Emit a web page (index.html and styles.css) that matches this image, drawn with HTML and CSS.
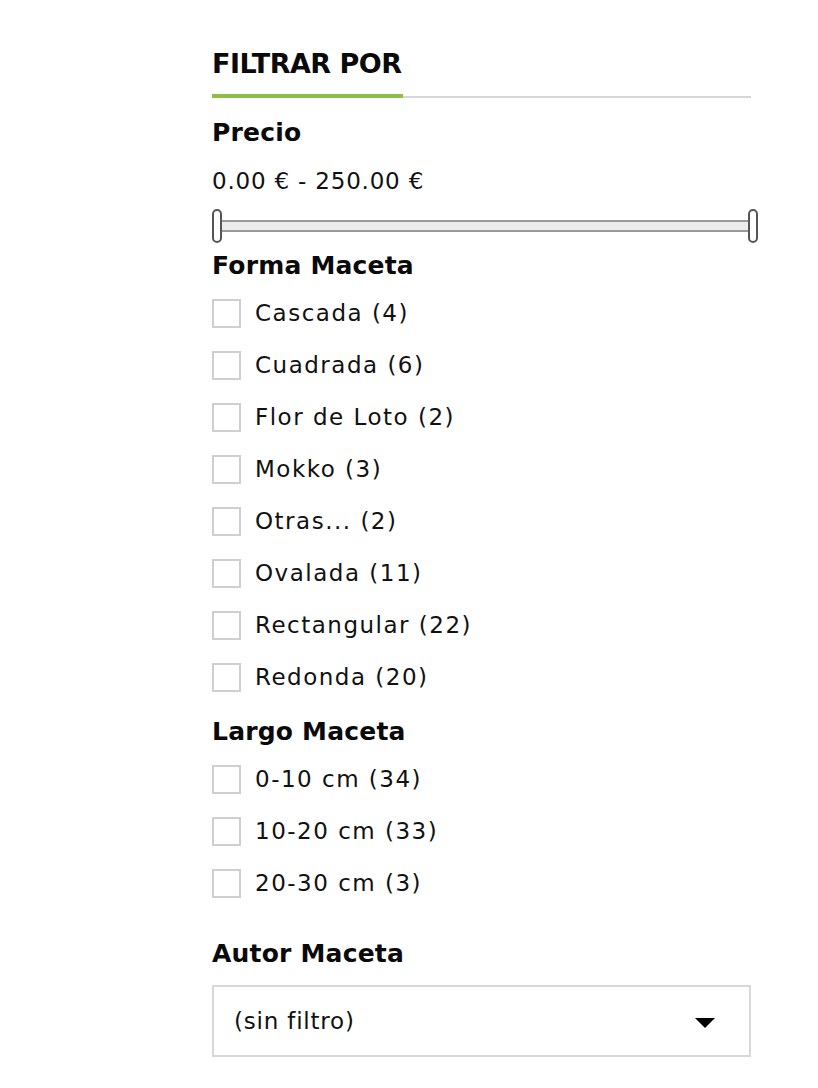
FILE: index.html
```html
<!DOCTYPE html>
<html lang="es">
<head>
<meta charset="utf-8">
<title>Filtrar por</title>
<link rel="stylesheet" href="styles.css">
</head>
<body>
<aside class="filters">
  <h2 class="title">FILTRAR POR</h2>

  <section class="group group-precio">
    <h3 class="group-title">Precio</h3>
    <p class="range-text">0.00 € - 250.00 €</p>
    <div class="slider">
      <span class="thumb"></span>
      <span class="track"></span>
      <span class="thumb"></span>
    </div>
  </section>

  <section class="group group-forma">
    <h3 class="group-title">Forma Maceta</h3>
    <ul class="options">
      <li class="option"><span class="box"></span><span class="label">Cascada (4)</span></li>
      <li class="option"><span class="box"></span><span class="label">Cuadrada (6)</span></li>
      <li class="option"><span class="box"></span><span class="label">Flor de Loto (2)</span></li>
      <li class="option"><span class="box"></span><span class="label">Mokko (3)</span></li>
      <li class="option"><span class="box"></span><span class="label">Otras... (2)</span></li>
      <li class="option"><span class="box"></span><span class="label">Ovalada (11)</span></li>
      <li class="option"><span class="box"></span><span class="label">Rectangular (22)</span></li>
      <li class="option"><span class="box"></span><span class="label">Redonda (20)</span></li>
    </ul>
  </section>

  <section class="group group-largo">
    <h3 class="group-title">Largo Maceta</h3>
    <ul class="options">
      <li class="option"><span class="box"></span><span class="label">0-10 cm (34)</span></li>
      <li class="option"><span class="box"></span><span class="label">10-20 cm (33)</span></li>
      <li class="option"><span class="box"></span><span class="label">20-30 cm (3)</span></li>
    </ul>
  </section>

  <section class="group group-autor">
    <h3 class="group-title">Autor Maceta</h3>
    <div class="select">
      <span class="select-text">(sin filtro)</span>
      <svg class="caret" width="20" height="10" viewBox="0 0 20 10"><path d="M0 0 H20 L10 10 Z" fill="#000"/></svg>
    </div>
  </section>
</aside>
</body>
</html>
```

FILE: styles.css
```css
* { box-sizing: border-box; }
html, body { margin: 0; padding: 0; background: #fff; }
body {
  font-family: "DejaVu Sans", "Open Sans", sans-serif;
  color: #111;
}
.filters {
  width: 539px;
  margin-left: 212px;
  padding-top: 46px;
}
.title {
  position: relative;
  margin: 0;
  font-size: 27px;
  line-height: 36px;
  font-weight: 700;
  letter-spacing: -0.5px;
  color: #0a0a0a;
  padding-bottom: 14px;
  border-bottom: 2px solid #d6d6d6;
}
.title::after {
  content: "";
  position: absolute;
  left: 0;
  bottom: -2px;
  width: 191px;
  height: 4px;
  background: #8fbf44;
}
.group { margin: 0; }
.group-title {
  margin: 0;
  font-size: 25px;
  line-height: 32px;
  font-weight: 700;
  letter-spacing: 0.2px;
  color: #0a0a0a;
}
.group-precio .group-title { margin-top: 19px; }
.group-forma .group-title { margin-top: 7px; }
.group-largo .group-title { margin-top: 13px; }
.group-autor .group-title { margin-top: 29px; }
.range-text {
  margin: 17px 0 0;
  font-size: 23px;
  line-height: 30px;
  letter-spacing: 0.8px;
  color: #111;
}
.slider {
  display: flex;
  align-items: center;
  width: 546px;
  height: 34px;
  margin-top: 13px;
}
.thumb {
  width: 10px;
  height: 34px;
  border: 2px solid #555;
  border-radius: 5px;
  background: #fff;
  flex: none;
}
.track {
  flex: 1;
  height: 12px;
  background: #ececec;
  border-top: 2px solid #9a9a9a;
  border-bottom: 2px solid #9a9a9a;
}
.options {
  list-style: none;
  margin: 5px 0 0;
  padding: 0;
}
.option {
  display: flex;
  align-items: center;
  height: 52px;
}
.box {
  width: 29px;
  height: 29px;
  border: 2px solid #cfcfcf;
  background: #fff;
  flex: none;
  margin-right: 14px;
}
.label {
  font-size: 23px;
  line-height: 30px;
  letter-spacing: 1.5px;
  color: #111;
}
.select {
  display: flex;
  align-items: center;
  justify-content: space-between;
  height: 72px;
  margin-top: 15px;
  border: 2px solid #d8d8d8;
  padding: 0 34px 0 20px;
}
.select-text {
  font-size: 23px;
  line-height: 30px;
  letter-spacing: 0.8px;
  color: #111;
}
.caret { display: block; margin-top: 4px; }
```
